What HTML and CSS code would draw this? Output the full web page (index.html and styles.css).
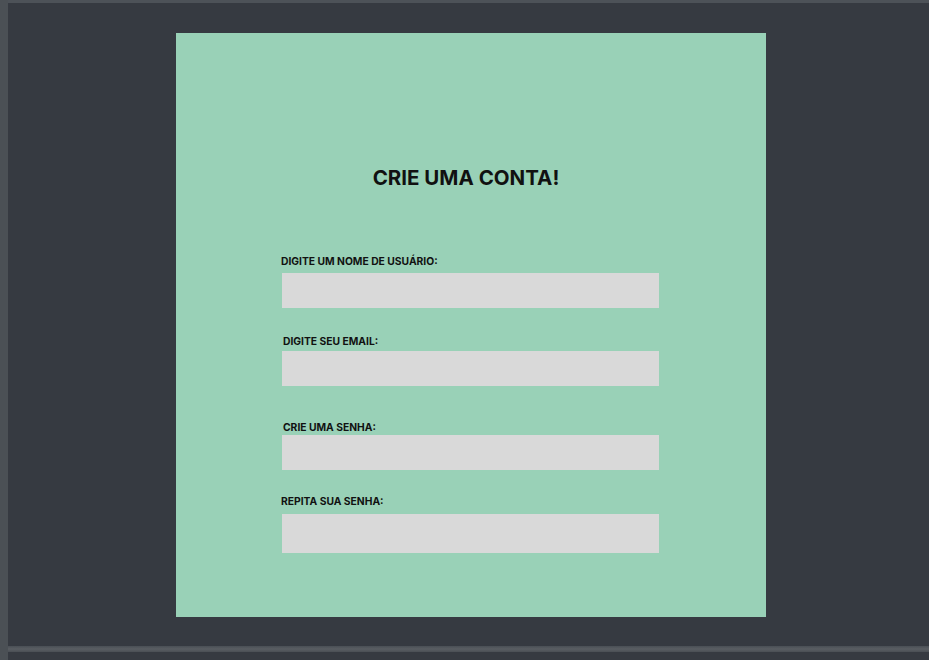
FILE: index.html
```html
<!DOCTYPE html>
<html lang="pt">
<head>
<meta charset="utf-8">
<title>Crie uma conta</title>
<link rel="stylesheet" href="styles.css">
</head>
<body>
<div class="screen">
  <div class="topbar"></div>
  <div class="main">
    <div class="canvas">
      <section class="panel">
        <h1 class="title">CRIE UMA CONTA!</h1>
        <form class="form">
          <div class="field field-1">
            <label class="label" for="u">DIGITE UM NOME DE USUÁRIO:</label>
            <input class="input" id="u" type="text">
          </div>
          <div class="field field-2">
            <label class="label" for="e">DIGITE SEU EMAIL:</label>
            <input class="input" id="e" type="email">
          </div>
          <div class="field field-3">
            <label class="label" for="p">CRIE UMA SENHA:</label>
            <input class="input" id="p" type="password">
          </div>
          <div class="field field-4">
            <label class="label" for="r">REPITA SUA SENHA:</label>
            <input class="input tall" id="r" type="password">
          </div>
        </form>
      </section>
    </div>
    <div class="divider"></div>
    <div class="below"></div>
  </div>
</div>
</body>
</html>
```
FILE: styles.css
```css
* { box-sizing: border-box; }
html, body { margin: 0; padding: 0; }
body {
  background: #363a41;
  font-family: Inter, "Noto Sans", sans-serif;
  width: 929px;
  height: 660px;
  overflow: hidden;
}
.screen {
  width: 929px;
  height: 660px;
  display: flex;
  flex-direction: column;
  border-left: 8px solid #4b5055;
}
.topbar {
  height: 3px;
  background: #4d5258;
  flex: none;
}
.main {
  flex: 1;
  display: flex;
  flex-direction: column;
}
.canvas {
  height: 643px;
  padding: 30px 0 0 168px;
  flex: none;
}
.panel {
  width: 590px;
  height: 584px;
  background: #99d1b7;
  display: flex;
  flex-direction: column;
  padding: 133px 0 0 0;
}
.title {
  margin: 0;
  padding-right: 10px;
  text-align: center;
  font-size: 20.5px;
  line-height: 24px;
  font-weight: 700;
  color: #111;
}
.form {
  display: flex;
  flex-direction: column;
  padding-left: 105px;
  margin-top: 65px;
}
.field {
  display: flex;
  flex-direction: column;
}
.label {
  font-size: 10.3px;
  line-height: 12px;
  font-weight: 700;
  color: #111;
}
.input {
  width: 377px;
  height: 35px;
  margin: 0 0 0 1px;
  border: none;
  background: #d9d9d9;
  outline: none;
  padding: 0;
}
.input.tall { height: 39px; }
.field-1 .input { margin-top: 6px; }
.field-2 { margin-top: 27px; }
.field-2 .label { padding-left: 2px; }
.field-2 .input { margin-top: 4px; }
.field-3 { margin-top: 35px; }
.field-3 .label { padding-left: 2px; }
.field-3 .input { margin-top: 2px; }
.field-4 { margin-top: 25px; }
.field-4 .input { margin-top: 7px; }
.divider {
  height: 6px;
  background: linear-gradient(#4a4f55, #5a5e63 50%, #4a4f55);
  flex: none;
}
.below {
  flex: 1;
  background: #363a41;
}
```
